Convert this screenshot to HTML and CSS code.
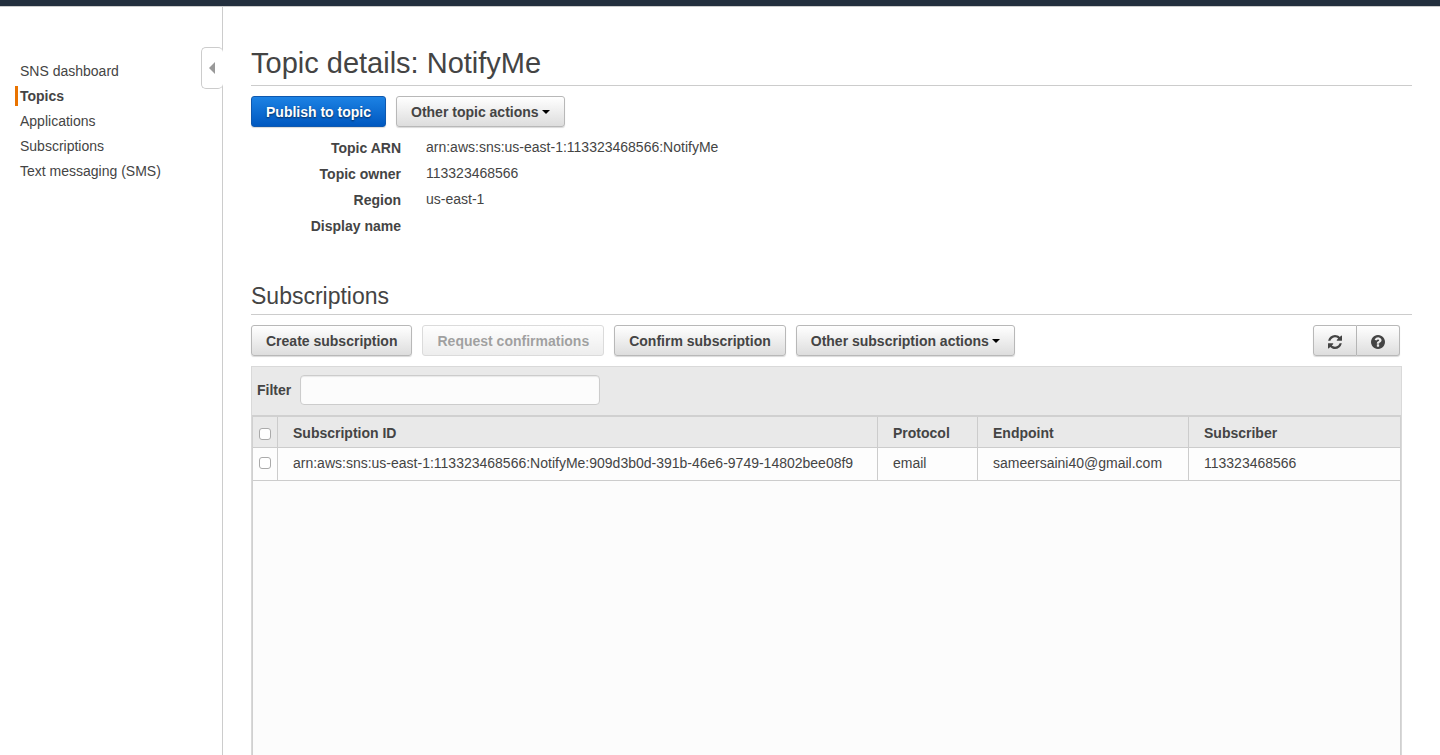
FILE: index.html
```html
<!DOCTYPE html>
<html lang="en">
<head>
<meta charset="utf-8">
<title>Topic details: NotifyMe</title>
<link rel="stylesheet" href="styles.css">
</head>
<body>
<header class="topbar"></header>
<div class="layout">
  <aside class="sidebar">
    <nav class="nav">
      <a class="nav-link" href="#">SNS dashboard</a>
      <a class="nav-link active" href="#" aria-current="page">Topics</a>
      <a class="nav-link" href="#">Applications</a>
      <a class="nav-link" href="#">Subscriptions</a>
      <a class="nav-link" href="#">Text messaging (SMS)</a>
    </nav>
    <button class="collapse" type="button" aria-label="Collapse navigation"><span class="collapse-arrow"></span></button>
  </aside>
  <main class="main">
    <h1 class="title">Topic details: NotifyMe</h1>
    <div class="toolbar">
      <button class="btn primary" type="button">Publish to topic</button>
      <button class="btn" type="button">Other topic actions<span class="caret"></span></button>
    </div>
    <dl class="details">
      <dt>Topic ARN</dt><dd>arn:aws:sns:us-east-1:113323468566:NotifyMe</dd>
      <dt>Topic owner</dt><dd>113323468566</dd>
      <dt>Region</dt><dd>us-east-1</dd>
      <dt>Display name</dt><dd></dd>
    </dl>
    <h2 class="subtitle">Subscriptions</h2>
    <div class="toolbar">
      <button class="btn" type="button">Create subscription</button>
      <button class="btn" type="button" disabled>Request confirmations</button>
      <button class="btn" type="button">Confirm subscription</button>
      <button class="btn" type="button">Other subscription actions<span class="caret"></span></button>
      <div class="btn-group">
        <button class="btn icon-btn" type="button" aria-label="Refresh">
          <svg class="icon" viewBox="0 0 1536 1536" aria-hidden="true"><path d="M1511 928q0 5-1 7-64 268-268 434.500t-478 166.500q-146 0-282.500-55t-243.500-157l-129 129q-19 19-45 19t-45-19-19-45v-448q0-26 19-45t45-19h448q26 0 45 19t19 45-19 45l-137 137q71 66 161 102t187 36q134 0 250-65t186-179q11-17 53-117 8-23 30-23h192q13 0 22.500 9.500t9.500 22.500zm25-800v448q0 26-19 45t-45 19h-448q-26 0-45-19t-19-45 19-45l138-138q-148-137-349-137-134 0-250 65t-186 179q-11 17-53 117-8 23-30 23h-199q-13 0-22.500-9.500t-9.500-22.500v-7q65-268 270-434.500t480-166.500q146 0 284 55.500t245 156.500l130-129q19-19 45-19t45 19 19 45z"/></svg>
        </button>
        <button class="btn icon-btn" type="button" aria-label="Help">
          <svg class="icon" viewBox="128 128 1536 1536" aria-hidden="true"><path d="M1024 1376v-192q0-14-9-23t-23-9h-192q-14 0-23 9t-9 23v192q0 14 9 23t23 9h192q14 0 23-9t9-23zm256-672q0-88-55.500-163t-138.500-116-170-41q-243 0-371 213-15 24 8 42l132 100q7 6 19 6 16 0 25-12 53-68 86-92 34-24 86-24 48 0 85.500 26t37.500 59q0 38-20 61t-68 45q-63 28-115.500 86.500t-52.500 125.500v36q0 14 9 23t23 9h192q14 0 23-9t9-23q0-19 21.500-49.500t54.500-49.500q32-18 49-28.500t46-35 44.500-48 28-60.500 12.500-81zm384 192q0 209-103 385.500t-279.500 279.500-385.500 103-385.500-103-279.500-279.500-103-385.500 103-385.500 279.500-279.500 385.500-103 385.500 103 279.500 279.500 103 385.500z"/></svg>
        </button>
      </div>
    </div>
    <section class="panel">
      <div class="filter">
        <label class="filter-label" for="filter">Filter</label>
        <input class="filter-input" id="filter" type="text">
      </div>
      <div class="grid">
        <table class="table">
          <colgroup><col class="col-check"><col><col class="col-protocol"><col class="col-endpoint"><col class="col-subscriber"></colgroup>
          <thead>
            <tr>
              <th class="check"><input type="checkbox" aria-label="Select all"></th>
              <th>Subscription ID</th><th>Protocol</th><th>Endpoint</th><th>Subscriber</th>
            </tr>
          </thead>
          <tbody>
            <tr>
              <td class="check"><input type="checkbox" aria-label="Select subscription"></td>
              <td>arn:aws:sns:us-east-1:113323468566:NotifyMe:909d3b0d-391b-46e6-9749-14802bee08f9</td>
              <td>email</td><td>sameersaini40@gmail.com</td><td>113323468566</td>
            </tr>
          </tbody>
        </table>
      </div>
    </section>
  </main>
</div>
</body>
</html>
```
FILE: styles.css
```css
* { box-sizing: border-box; }

body {
  margin: 0;
  height: 100vh;
  display: flex;
  flex-direction: column;
  overflow: hidden;
  background: #fff;
  color: #444;
  font: 14px/20px "Helvetica Neue", "Liberation Sans", Arial, sans-serif;
}

.topbar {
  flex: none;
  height: 7px;
  background: #232f3e;
  border-bottom: 1px solid #ccc;
}

.layout { flex: 1; display: flex; min-height: 0; }

.sidebar {
  position: relative;
  flex: none;
  width: 223px;
  padding: 54px 0 0 15px;
  border-right: 1px solid #ccc;
}

.nav { display: flex; flex-direction: column; align-items: flex-start; gap: 5px; }

.nav-link {
  padding-left: 2px;
  border-left: 3px solid transparent;
  color: #444;
  text-decoration: none;
}

.nav-link.active { border-left-color: #e97300; font-weight: bold; }

.collapse {
  position: absolute;
  top: 40px;
  right: -1px;
  width: 22px;
  height: 42px;
  padding: 0 2px 0 0;
  display: flex;
  align-items: center;
  justify-content: center;
  background: #fff;
  border: 1px solid #ccc;
  border-right: 0;
  border-radius: 5px;
}

.collapse-arrow {
  border: 6px solid transparent;
  border-left: 0;
  border-right-color: #999;
}

.main {
  flex: 1;
  min-width: 0;
  display: flex;
  flex-direction: column;
  padding: 36px 28px 0;
}

.title, .subtitle {
  margin: 0 0 10px;
  border-bottom: 1px solid #ccc;
  font-weight: normal;
}

.title { padding-bottom: 2px; font-size: 29px; line-height: 40px; }
.subtitle { padding-bottom: 2px; font-size: 23px; line-height: 32px; }

.toolbar { display: flex; gap: 10px; padding-right: 12px; }

.btn {
  height: 31px;
  padding: 0 14px;
  display: flex;
  align-items: center;
  white-space: nowrap;
  color: #444;
  font: bold 14px/20px "Helvetica Neue", "Liberation Sans", Arial, sans-serif;
  background: linear-gradient(#fff, #ddd);
  border: 1px solid #b8b8b8;
  border-radius: 3px;
  box-shadow: 0 1px 1px rgba(0, 0, 0, .15);
}

.btn.primary {
  color: #fff;
  background: linear-gradient(#1c82e4, #0058c0);
  border-color: #0f58ae;
  text-shadow: 0 1px 2px rgba(0, 0, 0, .6);
}

.btn:disabled { opacity: .5; box-shadow: none; }

.caret {
  margin-left: 3px;
  border: 4px solid transparent;
  border-top-color: #000;
  border-bottom: 0;
}

.btn-group { display: flex; margin-left: auto; }
.icon-btn { width: 44px; justify-content: center; padding: 2px 0 0; }
.icon-btn:first-child { border-radius: 3px 0 0 3px; }
.icon-btn:last-child { border-left: 0; width: 43px; border-radius: 0 3px 3px 0; }
.icon { width: 14px; height: 14px; fill: #444; }

.details {
  display: grid;
  grid-template-columns: 150px 1fr;
  grid-auto-rows: 20px;
  gap: 6px 25px;
  margin: 10px 0 45px;
}

.details dt { padding-top: 1px; font-weight: bold; text-align: right; }
.details dd { margin: 0; }

.panel {
  flex: 1;
  display: flex;
  flex-direction: column;
  margin: 10px 10px 0 0;
  border: 1px solid #d9d9d9;
  border-bottom: 0;
}

.filter {
  display: flex;
  gap: 9px;
  padding: 8px 5px 10px;
  background: #e9e9e9;
}

.filter-label { padding-top: 5px; font-weight: bold; }

.filter-input {
  width: 300px;
  height: 30px;
  padding: 4px 6px;
  color: #444;
  font: inherit;
  background: #fcfcfc;
  border: 1px solid #ccc;
  border-radius: 4px;
  box-shadow: inset 0 1px 1px rgba(0, 0, 0, .08);
}

.grid {
  flex: 1;
  background: #fcfcfc;
  border: 1px solid #d0d0d0;
  border-top-width: 2px;
  border-bottom: 0;
}

.table { width: 100%; table-layout: fixed; border-collapse: separate; border-spacing: 0; }
.col-check { width: 25px; }
.col-protocol { width: 100px; }
.col-endpoint { width: 211px; }
.col-subscriber { width: 211px; }

.table th, .table td {
  padding: 0 15px;
  text-align: left;
  white-space: nowrap;
  border-right: 1px solid #ccc;
  border-bottom: 1px solid #ccc;
}

.table th:last-child, .table td:last-child { border-right: 0; }
.table th { height: 31px; padding-top: 2px; background: #e9e9e9; }
.table td { height: 33px; padding-bottom: 2px; background: #fdfdfd; }
.table .check { padding: 0; text-align: center; }
.table th.check { padding-top: 4px; }
.table td.check { padding-bottom: 2px; }

.check input {
  appearance: none;
  display: block;
  width: 12px;
  height: 12px;
  margin: 0 auto;
  background: #fff;
  border: 1px solid #aaa;
  border-radius: 3px;
}
```
